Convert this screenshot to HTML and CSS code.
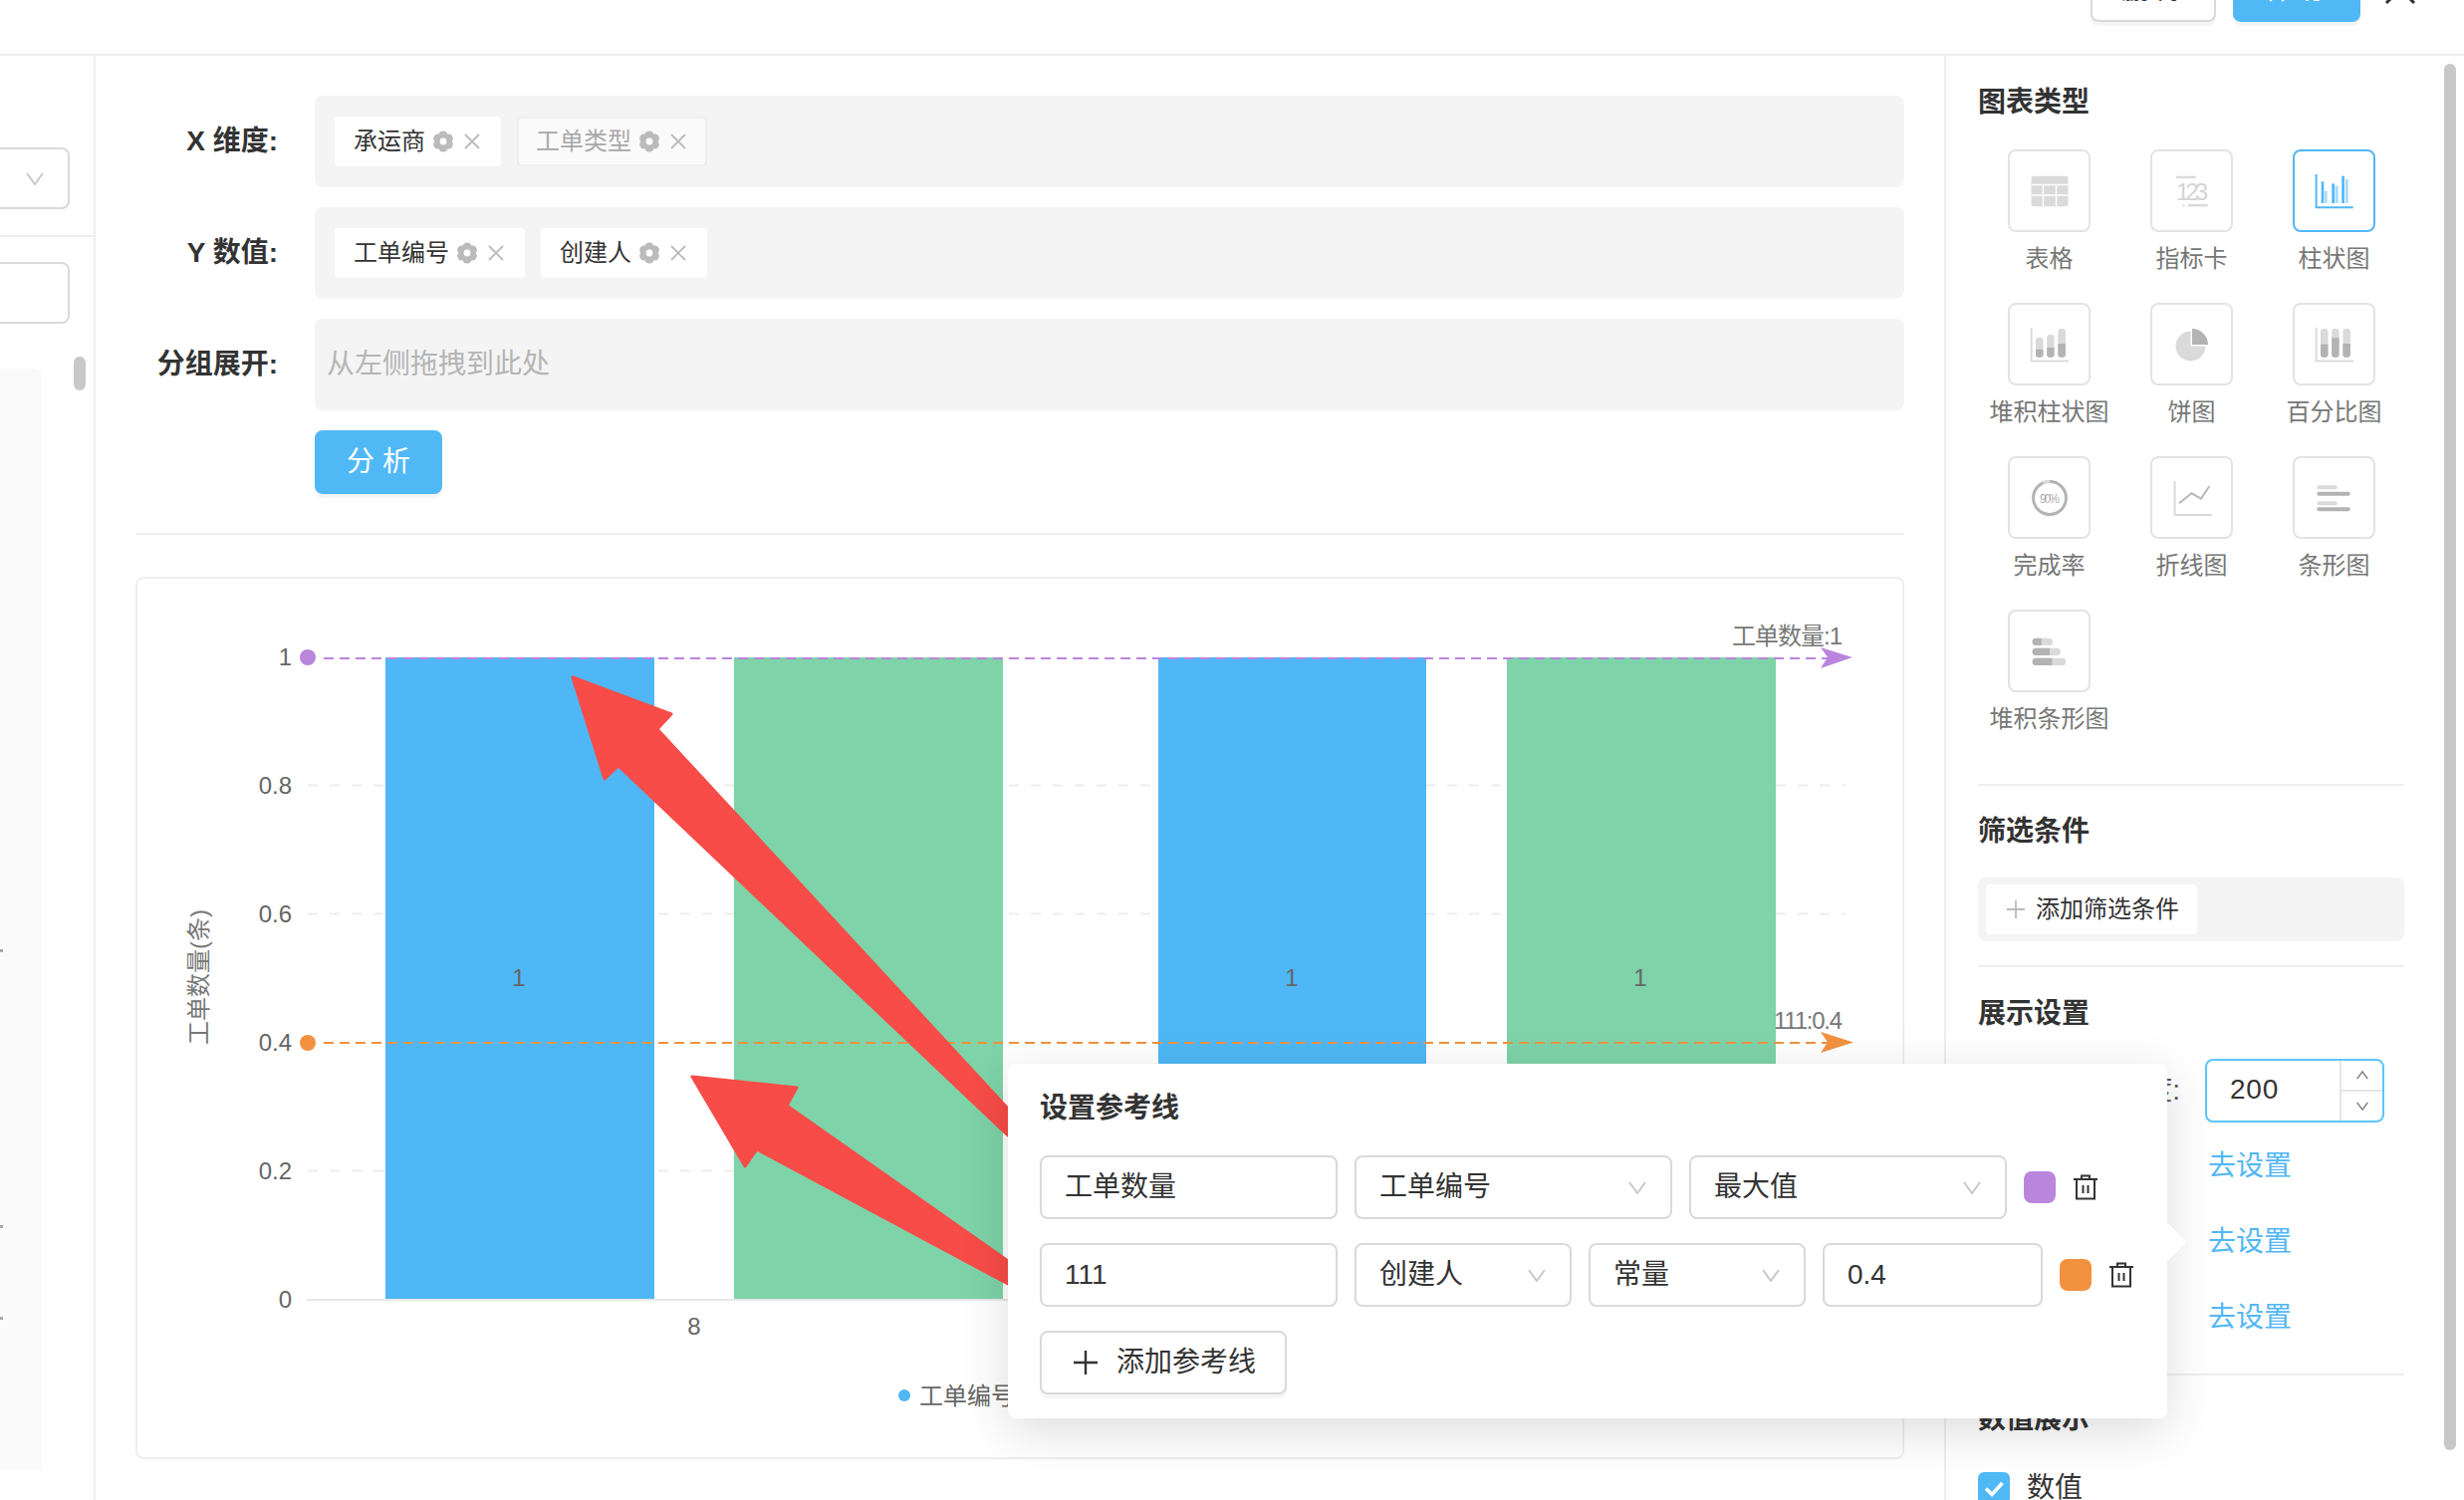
FILE: index.html
```html
<!DOCTYPE html>
<html lang="zh-CN">
<head>
  <meta charset="UTF-8">
  <meta name="viewport" content="width=device-width, initial-scale=1.0">
  <title>图表设置</title>
  <link rel="stylesheet" href="styles.css">
</head>

<body>
  <!-- shared icons -->
  <svg class="defs" width="0" height="0">
    <symbol id="gear" viewBox="0 0 20 22">
      <g fill="currentColor">
        <circle cx="10" cy="5" r="4.6" /><circle cx="10" cy="17" r="4.6" />
        <circle cx="4.8" cy="8" r="4.6" /><circle cx="15.2" cy="8" r="4.6" />
        <circle cx="4.8" cy="14" r="4.6" /><circle cx="15.2" cy="14" r="4.6" />
        <circle cx="10" cy="11" r="6" />
      </g>
      <circle cx="10" cy="11" r="3.4" fill="#fff" />
    </symbol>
    <symbol id="close" viewBox="0 0 16 16">
      <path d="M1 1 15 15M15 1 1 15" fill="none" stroke="currentColor" stroke-width="1.8" />
    </symbol>
    <symbol id="chevron" viewBox="0 0 18 13">
      <path d="M1 1 9 12 17 1" fill="none" stroke="currentColor" stroke-width="2" />
    </symbol>
    <symbol id="plus" viewBox="0 0 24 24">
      <path d="M12 0V24M0 12H24" fill="none" stroke="currentColor" stroke-width="2.4" />
    </symbol>
    <symbol id="trash" viewBox="0 0 24 26">
      <g fill="none" stroke="currentColor" stroke-width="2">
        <path d="M0 5H24M8 5V1.5H16V5M3 5V24.5H21V5M9.5 11V19M14.5 11V19" />
      </g>
    </symbol>
  </svg>

  <!-- ===== TOP BAR ===== -->
  <header class="topbar">
    <button class="btn btn-ghost">删 除</button>
    <button class="btn btn-primary topbar-save">保 存</button>
    <svg class="topbar-close" viewBox="0 0 30 30"><path d="M1 1 29 29M29 1 1 29" fill="none" stroke="#333" stroke-width="3" /></svg>
  </header>

  <div class="workspace">
    <!-- ===== LEFT PANEL ===== -->
    <aside class="left-panel">
      <div class="left-field left-select"><svg class="chevron"><use href="#chevron" /></svg></div>
      <div class="left-rule"></div>
      <div class="left-field left-input"></div>
      <div class="left-list">
        <i class="tick tick-a"></i><i class="tick tick-b"></i><i class="tick tick-c"></i>
      </div>
      <div class="left-scroll"></div>
    </aside>

    <!-- ===== MAIN ===== -->
    <main class="main">
      <div class="drop-row">
        <label class="drop-label">X 维度:</label>
        <div class="drop-box">
          <span class="chip">承运商<svg class="chip-gear"><use href="#gear" /></svg><svg class="chip-close"><use href="#close" /></svg></span>
          <span class="chip chip-off">工单类型<svg class="chip-gear"><use href="#gear" /></svg><svg class="chip-close"><use href="#close" /></svg></span>
        </div>
      </div>
      <div class="drop-row">
        <label class="drop-label">Y 数值:</label>
        <div class="drop-box">
          <span class="chip">工单编号<svg class="chip-gear"><use href="#gear" /></svg><svg class="chip-close"><use href="#close" /></svg></span>
          <span class="chip">创建人<svg class="chip-gear"><use href="#gear" /></svg><svg class="chip-close"><use href="#close" /></svg></span>
        </div>
      </div>
      <div class="drop-row">
        <label class="drop-label">分组展开:</label>
        <div class="drop-box drop-empty">从左侧拖拽到此处</div>
      </div>
      <button class="btn btn-primary btn-analyze">分 析</button>
      <div class="main-rule"></div>

      <!-- chart uses page coordinates through its viewBox -->
      <section class="chart-card">
        <svg class="chart" viewBox="138 581 1772 882">
          <g class="grid">
            <line x1="309" y1="788.5" x2="1853" y2="788.5" />
            <line x1="309" y1="917.5" x2="1853" y2="917.5" />
            <line x1="309" y1="1175.5" x2="1853" y2="1175.5" />
          </g>
          <line class="axis" x1="308" y1="1305" x2="1853" y2="1305" />

          <rect class="bar-a" x="387" y="660" width="270" height="644" />
          <rect class="bar-b" x="737" y="660" width="270" height="644" />
          <rect class="bar-a" x="1163" y="660" width="269" height="644" />
          <rect class="bar-b" x="1513" y="660" width="270" height="644" />

          <g class="tick-text">
            <text x="293" y="668">1</text>
            <text x="293" y="797">0.8</text>
            <text x="293" y="926">0.6</text>
            <text x="293" y="1055">0.4</text>
            <text x="293" y="1184">0.2</text>
            <text x="293" y="1313">0</text>
          </g>
          <g class="mid-text">
            <text x="521" y="990">1</text>
            <text x="1297" y="990">1</text>
            <text x="1647" y="990">1</text>
            <text x="697" y="1340">8</text>
          </g>
          <text class="axis-title" transform="translate(208 981) rotate(-90)">工单数量(条)</text>

          <circle class="fill-purple" cx="309" cy="660" r="8" />
          <line class="ref ref-purple" x1="325" y1="661" x2="1836" y2="661" />
          <polygon class="fill-purple" points="1828,650 1860,660 1828,671 1835,660" />
          <text class="ref-text" x="1850" y="647" textLength="111">工单数量:1</text>

          <circle class="fill-orange" cx="309" cy="1047" r="8" />
          <line class="ref ref-orange" x1="325" y1="1047" x2="1836" y2="1047" />
          <polygon class="fill-orange" points="1828,1036 1861,1046.5 1828,1057 1835,1046.5" />
          <text class="ref-text" x="1850" y="1033" textLength="69">111:0.4</text>

          <circle class="legend-dot" cx="908" cy="1401" r="6" />
          <text class="legend-text" x="923" y="1410">工单编号</text>

          <!-- red annotation arrows -->
          <polygon class="mark" points="575,680 674,717 660,732 1012,1113 1012,1140 621,769 607,782" />
          <polygon class="mark" points="695,1081 800,1092 790,1110 1012,1266 1012,1289 760,1154 748,1171" />
        </svg>
      </section>
    </main>

    <!-- ===== RIGHT PANEL ===== -->
    <aside class="right-panel">
      <h3 class="panel-title">图表类型</h3>
      <div class="type-grid">
        <div class="type-item">
          <div class="type-tile">
            <svg class="type-icon" viewBox="0 0 40 40">
              <rect class="lt" x="1.5" y="4.7" width="37" height="30.6" rx="2.5" />
              <path d="M1.5 13.5H38.5M1.5 24H38.5M13.5 13.5V35.3M26.5 13.5V35.3" stroke="#fff" stroke-width="1.4" fill="none" />
            </svg>
          </div>
          <span class="type-name">表格</span>
        </div>
        <div class="type-item">
          <div class="type-tile">
            <svg class="type-icon" viewBox="0 0 40 40">
              <rect class="lt" x="3.7" y="4.7" width="20" height="2.4" />
              <text class="num-text" x="20" y="28.5" textLength="32">123</text>
              <rect class="lt" x="16" y="33" width="19.7" height="2.4" />
              <polygon class="lt" points="10,35.4 13,35.4 11.5,32.5" />
            </svg>
          </div>
          <span class="type-name">指标卡</span>
        </div>
        <div class="type-item">
          <div class="type-tile type-on">
            <svg class="type-icon" viewBox="0 0 40 40">
              <path d="M1.6 3V36.3H38.7" fill="none" stroke="#52b7f5" stroke-width="2" />
              <g fill="#52b7f5">
                <rect x="6.7" y="10.3" width="2.6" height="21.7" /><rect x="17.3" y="12.3" width="2.8" height="19.7" /><rect x="27.2" y="4.7" width="2.7" height="27.3" />
              </g>
              <g fill="#a8dcfb">
                <rect x="10.1" y="19.7" width="2.5" height="12.3" /><rect x="20.7" y="14.7" width="3" height="17.3" /><rect x="30.9" y="8" width="2.8" height="24" />
              </g>
            </svg>
          </div>
          <span class="type-name">柱状图</span>
        </div>
        <div class="type-item">
          <div class="type-tile">
            <svg class="type-icon" viewBox="0 0 40 40">
              <path class="lt-line" d="M1.6 3V36.5H39" />
              <rect class="lt" x="6" y="13" width="7.5" height="19.7" rx="3" /><rect class="lt" x="17.2" y="10" width="7.4" height="22.7" rx="3" /><rect class="lt" x="28.4" y="4" width="7.5" height="28.7" rx="3" />
              <path class="dk" d="M6 24.7H13.5V29.7A3 3 0 0 1 10.500 32.700H9A3 3 0 0 1 6 29.700ZM17.200 23H24.600V29.700A3 3 0 0 1 21.600 32.700H20.200A3 3 0 0 1 17.200 29.700ZM28.400 19H35.900V29.700A3 3 0 0 1 32.900 32.700H31.400A3 3 0 0 1 28.400 29.700Z" />
            </svg>
          </div>
          <span class="type-name">堆积柱状图</span>
        </div>
        <div class="type-item">
          <div class="type-tile">
            <svg class="type-icon" viewBox="0 0 40 40">
              <path class="lt" d="M18.500 6.500V21.500H33.500A15 15 0 1 1 18.500 6.500Z" />
              <path class="dk" d="M20 4A16 16 0 0 1 36 20H20Z" />
            </svg>
          </div>
          <span class="type-name">饼图</span>
        </div>
        <div class="type-item">
          <div class="type-tile">
            <svg class="type-icon" viewBox="0 0 40 40">
              <path class="lt-line" d="M1.600 3V36.500H39" />
              <rect class="lt" x="6" y="4" width="7.500" height="28.700" rx="3" /><rect class="lt" x="17.200" y="4" width="7.400" height="28.700" rx="3" /><rect class="lt" x="28.400" y="4" width="7.500" height="28.700" rx="3" />
              <path class="dk" d="M6 19.700H13.500V29.700A3 3 0 0 1 10.500 32.700H9A3 3 0 0 1 6 29.700ZM17.200 13.300H24.600V29.700A3 3 0 0 1 21.600 32.700H20.200A3 3 0 0 1 17.200 29.700ZM28.400 19H35.900V29.700A3 3 0 0 1 32.900 32.700H31.400A3 3 0 0 1 28.400 29.700Z" />
            </svg>
          </div>
          <span class="type-name">百分比图</span>
        </div>
        <div class="type-item">
          <div class="type-tile">
            <svg class="type-icon" viewBox="0 0 40 40">
              <circle cx="20" cy="20" r="16.500" fill="none" stroke="#b3b3b3" stroke-width="3" />
              <path d="M13.500 4.800A16.500 16.500 0 0 1 20 3.500" fill="none" stroke="#dcdcdc" stroke-width="3" />
              <text class="ring-text" x="20" y="24.500" textLength="20">90%</text>
            </svg>
          </div>
          <span class="type-name">完成率</span>
        </div>
        <div class="type-item">
          <div class="type-tile">
            <svg class="type-icon" viewBox="0 0 40 40">
              <path class="lt-line" d="M2.600 3V37H40" />
              <path d="M7 25.300 19.500 15.300 28.900 20.700 37.400 8" fill="none" stroke="#b8b8b8" stroke-width="2" />
            </svg>
          </div>
          <span class="type-name">折线图</span>
        </div>
        <div class="type-item">
          <div class="type-tile">
            <svg class="type-icon" viewBox="0 0 40 40">
              <rect class="lt" x="2.300" y="7.300" width="20.400" height="4" rx="2" />
              <rect class="dk" x="2.300" y="13.700" width="33.400" height="4" rx="2" />
              <rect class="lt" x="2.300" y="23.300" width="20.400" height="4" rx="2" />
              <rect class="dk" x="2.300" y="29.300" width="33.400" height="4" rx="2" />
            </svg>
          </div>
          <span class="type-name">条形图</span>
        </div>
        <div class="type-item">
          <div class="type-tile">
            <svg class="type-icon" viewBox="0 0 40 40">
              <rect class="lt" x="2.600" y="6.700" width="20.400" height="7.300" rx="3.600" />
              <rect class="lt" x="2.600" y="16.700" width="28.300" height="7.300" rx="3.600" />
              <rect class="lt" x="2.600" y="26.700" width="33.700" height="7.300" rx="3.600" />
              <path class="dk" d="M6.200 6.700H11.800V14H6.200A3.600 3.600 0 0 1 6.200 6.700ZM6.200 16.700H20V24H6.200A3.600 3.600 0 0 1 6.200 16.700ZM6.200 26.700H22.400V34H6.200A3.600 3.600 0 0 1 6.200 26.700Z" />
            </svg>
          </div>
          <span class="type-name">堆积条形图</span>
        </div>
      </div>
      <div class="panel-rule rule-types"></div>

      <h3 class="panel-title">筛选条件</h3>
      <div class="filter-box">
        <span class="filter-add"><svg class="filter-plus"><use href="#plus" /></svg>添加筛选条件</span>
      </div>
      <div class="panel-rule rule-filter"></div>

      <h3 class="panel-title">展示设置</h3>
      <div class="setting-list">
        <div class="setting-row">
          <span class="setting-label">图表高度:</span>
          <div class="stepper">
            <span class="stepper-value">200</span>
            <div class="stepper-btns">
              <span class="stepper-btn"><svg class="stepper-up"><use href="#chevron" /></svg></span>
              <span class="stepper-btn"><svg class="stepper-down"><use href="#chevron" /></svg></span>
            </div>
          </div>
        </div>
        <div class="setting-row"><span class="setting-label setting-label-short">排序</span><a class="setting-link">去设置</a></div>
        <div class="setting-row"><span class="setting-label setting-label-short">参考线</span><a class="setting-link">去设置</a></div>
        <div class="setting-row"><span class="setting-label setting-label-short">颜色</span><a class="setting-link">去设置</a></div>
      </div>
      <div class="panel-rule rule-setting"></div>

      <h3 class="panel-title">数值展示</h3>
      <div class="check-row">
        <span class="check-box"><svg viewBox="0 0 32 32"><path d="M8 16.500 14 22.500 24.500 11" fill="none" stroke="#fff" stroke-width="3.600" /></svg></span>
        数值
      </div>
      <div class="right-scroll"></div>
    </aside>
  </div>

  <!-- ===== REFERENCE LINE POPOVER ===== -->
  <div class="popover">
    <h4 class="popover-title">设置参考线</h4>
    <div class="ref-row">
      <div class="field w-name">工单数量</div>
      <div class="field field-select w-wide">工单编号<svg class="chevron"><use href="#chevron" /></svg></div>
      <div class="field field-select w-wide">最大值<svg class="chevron"><use href="#chevron" /></svg></div>
      <span class="swatch swatch-purple"></span>
      <svg class="trash"><use href="#trash" /></svg>
    </div>
    <div class="ref-row">
      <div class="field w-name">111</div>
      <div class="field field-select w-narrow">创建人<svg class="chevron"><use href="#chevron" /></svg></div>
      <div class="field field-select w-narrow">常量<svg class="chevron"><use href="#chevron" /></svg></div>
      <div class="field w-value">0.4</div>
      <span class="swatch swatch-orange"></span>
      <svg class="trash"><use href="#trash" /></svg>
    </div>
    <button class="btn btn-ghost btn-addref"><svg class="addref-plus"><use href="#plus" /></svg>添加参考线</button>
    <span class="popover-arrow"></span>
  </div>
</body>
</html>
```

FILE: styles.css
```css
* { box-sizing: border-box; }

html, body {
  margin: 0; padding: 0;
  width: 2474px; height: 1506px;
  overflow: hidden;
  background: #fff;
  color: #333;
  font: 28px/40px "Liberation Sans", "Noto Sans CJK SC", sans-serif;
}

.defs { position: absolute; }

/* ---------------- Buttons ---------------- */
.btn {
  height: 64px;
  border-radius: 8px;
  font: inherit;
  cursor: pointer;
  box-shadow: 0 4px 0 rgba(0,0,0,0.04);
}
.btn-primary { border: none; background: #51b8f6; color: #fff; }
.btn-ghost { border: 2px solid #d9d9d9; background: #fff; color: #333; }

/* ---------------- Top bar (scrolled partly out of view) ---------------- */
.topbar {
  display: flex;
  align-items: flex-end;
  justify-content: flex-end;
  height: 56px;
  padding: 0 49px 32px 0;
  border-bottom: 2px solid #eee;
}
.topbar .btn { flex: none; width: 126px; }
.topbar .topbar-save { width: 128px; margin-left: 17px; }
.topbar-close { flex: none; width: 30px; height: 30px; margin: 0 0 18px 25px; }

.workspace { display: flex; height: 1450px; }

/* ---------------- Left panel ---------------- */
.left-panel {
  position: relative;
  flex: none;
  width: 96px;
  padding-top: 92px;
  border-right: 2px solid #eee;
}
.left-field {
  display: flex;
  align-items: center;
  justify-content: flex-end;
  width: 70px;
  height: 62px;
  padding-right: 24px;
  border: 2px solid #d9d9d9;
  border-left: none;
  border-radius: 0 8px 8px 0;
}
.left-rule { height: 2px; margin: 26px 0 25px; background: #eee; }
.left-list {
  position: relative;
  width: 42px;
  height: 1106px;
  margin-top: 45px;
  border-radius: 0 8px 0 0;
  background: #fafafa;
}
.tick { position: absolute; left: 0; width: 3px; height: 3px; background: #aaa; }
.tick-a { top: 583px; }
.tick-b { top: 860px; }
.tick-c { top: 952px; }
.left-scroll {
  position: absolute;
  top: 302px; left: 74px;
  width: 12px; height: 34px;
  border-radius: 6px;
  background: #c8c8c8;
}
.chevron { flex: none; width: 18px; height: 13px; color: #c8c8c8; }

/* ---------------- Main column ---------------- */
.main { flex: none; width: 1856px; padding: 40px 40px 0; }

.drop-row { display: flex; margin-bottom: 20px; }
.drop-label {
  flex: none;
  width: 143px;
  margin-right: 37px;
  font-weight: 700;
  line-height: 92px;
  text-align: right;
  white-space: nowrap;
}
.drop-box {
  display: flex;
  flex: 1;
  align-items: center;
  gap: 16px;
  height: 92px;
  padding-left: 20px;
  border-radius: 8px;
  background: #f4f4f4;
}
.drop-empty { padding-left: 12px; color: #b5b5b5; }

.chip {
  display: flex;
  align-items: center;
  height: 50px;
  padding: 0 21px 0 19px;
  border-radius: 4px;
  background: #fff;
  color: #333;
  font-size: 24px;
}
.chip-off { border: 2px solid #eee; padding: 0 19px 0 17px; background: #fafafa; color: #a8a8a8; }
.chip-gear { width: 20px; height: 22px; margin-left: 8px; color: #bbb; }
.chip-close { width: 16px; height: 16px; margin-left: 11px; color: #bbb; }

.btn-analyze { display: block; width: 128px; margin-left: 180px; }
.main-rule { height: 2px; margin-top: 39px; background: #eee; }

/* ---------------- Chart card ---------------- */
.chart-card {
  height: 886px;
  margin-top: 42px;
  border: 2px solid #eee;
  border-radius: 8px;
}
.chart { display: block; width: 1772px; height: 882px; font-size: 24px; }
.grid line { stroke: #eee; stroke-width: 2; stroke-dasharray: 10 12; }
.axis { stroke: #e8e8e8; stroke-width: 2; }
.bar-a { fill: #4fb7f5; }
.bar-b { fill: #7ed3a8; }
.tick-text text { fill: #666; text-anchor: end; }
.mid-text text { fill: #666; text-anchor: middle; }
.axis-title { fill: #777; text-anchor: middle; }
.ref { stroke-width: 2; stroke-dasharray: 10 6; }
.ref-purple { stroke: #b985dd; }
.ref-orange { stroke: #f29240; }
.fill-purple { fill: #b985dd; }
.fill-orange { fill: #f29240; }
.ref-text { fill: #777; text-anchor: end; }
.legend-dot { fill: #4fb7f5; }
.legend-text { fill: #666; }
.mark { fill: #f84c48; stroke: #f84c48; stroke-width: 3; stroke-linejoin: round; }

/* ---------------- Right panel ---------------- */
.right-panel {
  position: relative;
  flex: none;
  width: 522px;
  padding: 27px 60px 0 32px;
  border-left: 2px solid #eee;
}
.panel-title { margin: 0; font-size: 28px; font-weight: 700; line-height: 40px; }
.panel-rule { height: 2px; background: #eee; }
.rule-types { margin: 48px 0 26px; }
.rule-filter { margin: 24px 0 27px; }
.rule-setting { margin: 24px 0 24px; }

.type-grid {
  display: grid;
  grid-template-columns: repeat(3, 143px);
  row-gap: 27px;
  margin-top: 27px;
}
.type-item { display: flex; flex-direction: column; align-items: center; }
.type-tile {
  display: flex;
  align-items: center;
  justify-content: center;
  width: 83px;
  height: 83px;
  border: 2px solid #e3e3e3;
  border-radius: 8px;
}
.type-on { border-color: #52b7f5; }
.type-icon { width: 40px; height: 40px; overflow: visible; }
.type-name { margin-top: 10px; color: #777; font-size: 24px; line-height: 34px; white-space: nowrap; }
.lt { fill: #dadada; }
.dk { fill: #b3b3b3; }
.lt-line { fill: none; stroke: #dadada; stroke-width: 2; }
.num-text { fill: #d4d4d4; font-size: 24px; text-anchor: middle; }
.ring-text { fill: #aaa; font-size: 12px; text-anchor: middle; }

.filter-box {
  height: 64px;
  margin-top: 26px;
  padding: 7px 8px;
  border-radius: 8px;
  background: #f4f4f4;
}
.filter-add {
  display: flex;
  align-items: center;
  width: 212px;
  height: 50px;
  padding-left: 21px;
  border-radius: 4px;
  background: #fff;
  font-size: 24px;
}
.filter-plus { width: 18px; height: 18px; margin-right: 11px; color: #bbb; }

.setting-list { display: flex; flex-direction: column; gap: 12px; margin-top: 25px; }
.setting-row { display: flex; align-items: center; height: 64px; }
.setting-label { flex: none; width: 203px; margin-right: 28px; color: #555; text-align: right; }
.setting-label-short { padding-right: 24px; }
.setting-link { color: #52b7f5; }

.stepper {
  display: flex;
  flex: none;
  width: 180px;
  height: 64px;
  margin-left: -3px;
  border: 2px solid #5cc6ff;
  border-radius: 8px;
}
.stepper-value { flex: 1; padding-left: 23px; letter-spacing: 0.8px; line-height: 58px; }
.stepper-btns { display: flex; flex-direction: column; width: 43px; border-left: 2px solid #e5e5e5; }
.stepper-btn { display: flex; flex: 1; align-items: center; justify-content: center; }
.stepper-btn + .stepper-btn { border-top: 2px solid #e5e5e5; }
.stepper-up, .stepper-down { width: 12px; height: 9px; color: #777; }
.stepper-up { transform: rotate(180deg); }

.check-row { display: flex; align-items: center; gap: 17px; height: 32px; margin-top: 33px; }
.check-box { flex: none; width: 32px; height: 32px; border-radius: 6px; background: #51b8f6; }
.check-box svg { display: block; }

.right-scroll {
  position: absolute;
  top: 8px; left: 500px;
  width: 12px; height: 1392px;
  border-radius: 6px;
  background: #c8c8c8;
}

/* ---------------- Popover ---------------- */
.popover {
  position: absolute;
  top: 1068px; left: 1012px;
  width: 1164px;
  height: 356px;
  padding: 25px 32px 0;
  border-radius: 8px;
  background: #fff;
  box-shadow: 0 12px 50px rgba(0,0,0,0.14);
}
.popover-title { margin: 0 0 27px; font-size: 28px; font-weight: 700; line-height: 40px; }
.ref-row { display: flex; align-items: center; gap: 17px; height: 64px; margin-bottom: 24px; }
.field {
  display: flex;
  flex: none;
  align-items: center;
  justify-content: space-between;
  height: 64px;
  padding: 0 24px 0 23px;
  border: 2px solid #d9d9d9;
  border-radius: 8px;
  background: #fff;
}
.w-name { width: 299px; }
.w-wide { width: 319px; }
.w-narrow { width: 218px; }
.w-value { width: 221px; }
.swatch { flex: none; width: 32px; height: 32px; border-radius: 8px; }
.swatch-purple { background: #b985dd; }
.swatch-orange { background: #f29240; }
.trash { flex: none; width: 24px; height: 26px; margin-left: 1px; color: #333; }
.btn-addref {
  display: flex;
  align-items: center;
  width: 248px;
  padding: 0 0 0 32px;
}
.addref-plus { width: 24px; height: 24px; margin-right: 19px; color: #333; }
.popover-arrow {
  position: absolute;
  top: 165px; left: 1150px;
  width: 28px; height: 28px;
  border-radius: 4px;
  background: #fff;
  transform: rotate(45deg);
  clip-path: polygon(0 0, 100% 0, 100% 100%);
}
```
